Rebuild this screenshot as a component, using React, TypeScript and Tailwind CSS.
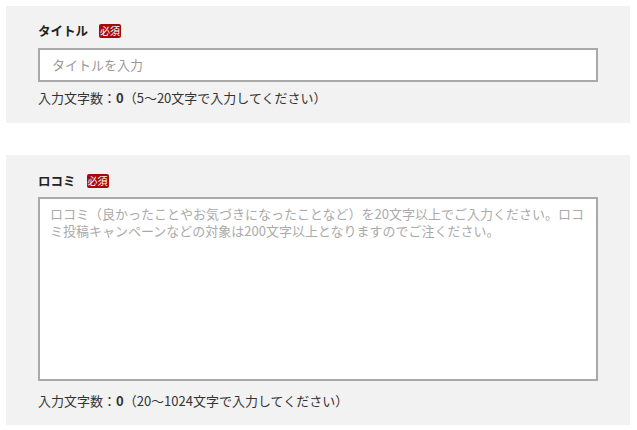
export default function App() {
  const font = { fontFamily: '"Noto Sans CJK JP", "Noto Sans", sans-serif' }

  const Badge = () => (
    <span className="inline-flex items-center justify-center h-[14px] w-[22px] rounded-[2px] bg-[#a50a0a] text-white text-[10px] leading-none">
      必須
    </span>
  )

  return (
    <div className="w-[637px] h-[430px] bg-white pt-[6px] pl-[6px]" style={font}>
      {/* タイトル */}
      <div className="w-[624px] bg-[#f2f2f2] pl-[32px] pt-[15px] pb-[15px]">
        <div className="flex items-center gap-[11px] h-[20px]">
          <span className="text-[12.5px] font-bold text-[#222]">タイトル</span>
          <Badge />
        </div>
        <div className="mt-[7px] w-[560px] h-[34px] border-2 border-[#a9a9a9] bg-white flex items-center px-[12px]">
          <span className="text-[13px] text-[#999]">タイトルを入力</span>
        </div>
        <div className="mt-[6px] h-[20px] leading-[20px] text-[13px] text-[#333]">
          入力文字数：<span className="font-bold">0</span>（5〜20文字で入力してください）
        </div>
      </div>

      {/* 口コミ */}
      <div className="mt-[32px] w-[624px] bg-[#f2f2f2] pl-[32px] pt-[16px] pb-[14px]">
        <div className="flex items-center gap-[11px] h-[20px]">
          <span className="text-[12.5px] font-bold text-[#222]">ロコミ</span>
          <Badge />
        </div>
        <div className="mt-[6px] w-[560px] h-[184px] border-2 border-[#a9a9a9] bg-white pl-[10px] pr-[6px] pt-[6px]">
          <p className="text-[13px] leading-[17px] text-[#aaa]">
            ロコミ（良かったことやお気づきになったことなど）を20文字以上でご入力ください。ロコミ投稿キャンペーンなどの対象は200文字以上となりますのでご注ください。
          </p>
        </div>
        <div className="mt-[10px] h-[20px] leading-[20px] text-[13px] text-[#333]">
          入力文字数：<span className="font-bold">0</span>（20〜1024文字で入力してください）
        </div>
      </div>
    </div>
  )
}
